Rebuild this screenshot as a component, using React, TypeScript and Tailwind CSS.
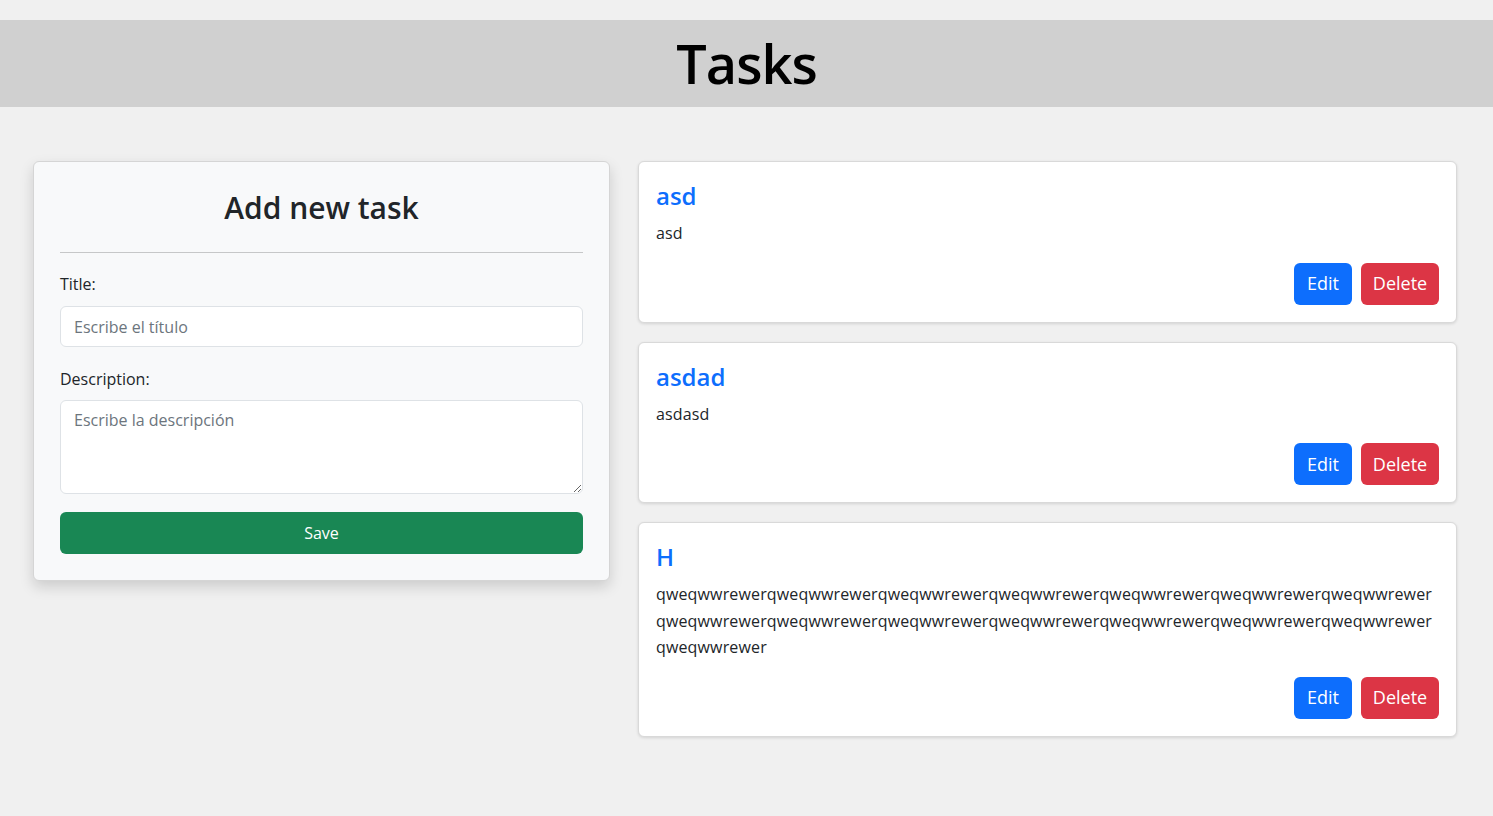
import React from "react";

const font = { fontFamily: '"Open Sans", "Noto Sans", sans-serif' };

function TaskCard({ title, desc }: { title: string; desc: string }) {
  return (
    <div className="rounded-[6px] border border-[#d9d9d9] bg-white p-[17px] shadow-[0_1px_3px_rgba(0,0,0,0.12)]">
      <h4 className="mt-[2px] text-[24px] leading-[29px] font-semibold text-[#0d6efd]">{title}</h4>
      <p className="mt-[10px] text-[16px] leading-[26.5px] tracking-[0.15px] text-[#212529] break-all">{desc}</p>
      <div className="mt-[16px] flex justify-end gap-[9px]">
        <button className="h-[42px] w-[58px] rounded-[6px] bg-[#0d6efd] text-[18px] text-white">Edit</button>
        <button className="h-[42px] w-[78px] rounded-[6px] bg-[#dc3545] text-[18px] text-white">Delete</button>
      </div>
    </div>
  );
}

export default function App() {
  const long = "qweqwwrewer".repeat(15);
  return (
    <div className="min-h-[816px] bg-[#f0f0f0] pt-[20px]" style={font}>
      <header className="flex h-[87px] items-center justify-center bg-[#d0d0d0]">
        <h1 className="text-[54px] leading-[67px] font-semibold tracking-[-1px] text-black">Tasks</h1>
      </header>
      <main className="flex items-start gap-[28px] pl-[33px] pr-[36px] pt-[54px]">
        <div className="w-[577px] shrink-0 rounded-[6px] border border-[#d5d5d5] bg-[#f8f9fa] px-[26px] pt-[27px] pb-[26px] shadow-[0_6px_14px_rgba(0,0,0,0.15)]">
          <h2 className="text-center text-[30px] leading-[38px] font-semibold text-[#212529]">Add new task</h2>
          <hr className="mt-[25px] border-t border-[#c6c7c8]" />
          <label className="mt-[19px] block text-[16px] leading-[24px] text-[#212529]">Title:</label>
          <input
            className="mt-[10px] block h-[41px] w-full rounded-[6px] border border-[#dee2e6] bg-white px-[13px] text-[16px] text-[#212529] outline-none placeholder:text-[#6c757d]"
            placeholder="Escribe el título"
          />
          <label className="mt-[20px] block text-[16px] leading-[24px] text-[#212529]">Description:</label>
          <textarea
            className="mt-[9px] block h-[94px] w-full rounded-[6px] border border-[#dee2e6] bg-white px-[13px] py-[7px] text-[16px] leading-[24px] text-[#212529] outline-none placeholder:text-[#6c757d]"
            placeholder="Escribe la descripción"
          />
          <button className="mt-[18px] block h-[42px] w-full rounded-[6px] bg-[#198754] text-[16px] text-white">Save</button>
        </div>
        <div className="flex flex-1 flex-col gap-[19px]">
          <TaskCard title="asd" desc="asd" />
          <TaskCard title="asdad" desc="asdasd" />
          <TaskCard title="H" desc={long} />
        </div>
      </main>
    </div>
  );
}
